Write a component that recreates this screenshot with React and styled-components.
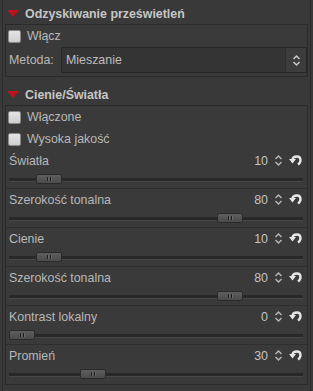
import React from 'react';
import styled, { createGlobalStyle } from 'styled-components';

const Global = createGlobalStyle`
  html, body { margin: 0; padding: 0; background: #393939; }
  body { width: 313px; height: 391px; overflow: hidden; font-family: "Liberation Sans", Arial, sans-serif; }
`;

const Panel = styled.div`
  width: 313px;
  height: 391px;
  box-sizing: border-box;
  padding: 0 2px;
  background: #393939;
`;

const Column = styled.div`
  height: 100%;
  box-sizing: border-box;
  border-left: 1px solid #2c2c2c;
  border-right: 1px solid #2c2c2c;
  padding: 3px 2px 0 2px;
  display: flex;
  flex-direction: column;
`;

const Header = styled.div`
  height: 21px;
  display: flex;
  align-items: center;
  gap: 6px;
  padding-left: 2px;
  margin-top: ${p => p.$gap || 0}px;
  color: #c6c6c6;
  font-weight: bold;
  font-size: 12.4px;
`;

const Triangle = styled.span`
  width: 0;
  height: 0;
  border-left: 6px solid transparent;
  border-right: 6px solid transparent;
  border-top: 7px solid #b8161c;
  margin-top: -1px;
`;

const Frame = styled.div`
  border: 1px solid #2a2a2a;
  background: #3a3a3a;
  display: flex;
  flex-direction: column;
  padding-bottom: ${p => p.$pb || 0}px;
`;

const CheckRow = styled.label`
  height: 22px;
  display: flex;
  align-items: center;
  gap: 6px;
  padding-left: 2px;
  color: #b8b8b8;
  font-size: 12.4px;
`;

const Box = styled.span`
  width: 13px;
  height: 13px;
  box-sizing: border-box;
  border: 1px solid #8a8a8a;
  border-radius: 2px;
  background: linear-gradient(#e4e4e4, #cfcfcf);
`;

const MethodRow = styled.div`
  height: 26px;
  display: flex;
  align-items: center;
  padding-left: 3px;
  color: #b8b8b8;
  font-size: 12.4px;
`;

const MethodLabel = styled.span`
  width: 52px;
`;

const Combo = styled.div`
  flex: 1;
  height: 26px;
  box-sizing: border-box;
  border: 1px solid #262626;
  background: #343434;
  display: flex;
  align-items: stretch;
`;

const ComboText = styled.span`
  flex: 1;
  display: flex;
  align-items: center;
  padding-left: 4px;
  color: #bdbdbd;
`;

const ComboButton = styled.span`
  width: 20px;
  display: flex;
  align-items: center;
  justify-content: center;
  background: #3c3c3c;
  border-left: 1px solid #2e2e2e;
`;

const Group = styled.div`
  height: 39px;
  box-sizing: border-box;
  display: flex;
  flex-direction: column;
  border-bottom: ${p => (p.$last ? 'none' : '1px solid #2e2e2e')};
`;

const LabelRow = styled.div`
  height: 21px;
  display: flex;
  align-items: center;
  padding-left: 3px;
  padding-right: 5px;
  color: #b8b8b8;
  font-size: 12.4px;
`;

const LabelText = styled.span`
  flex: 1;
`;

const Value = styled.span`
  color: #c4c4c4;
  margin-right: 6px;
`;

const IconSlot = styled.span`
  display: flex;
  align-items: center;
  margin-left: ${p => p.$ml || 0}px;
`;

const SliderRow = styled.div`
  height: 17px;
  display: flex;
  align-items: center;
  padding: 0 4px 0 3px;
`;

const Track = styled.div`
  position: relative;
  flex: 1;
  height: 3px;
  background: #282828;
  border-bottom: 1px solid #474747;
`;

const Thumb = styled.div`
  position: absolute;
  top: -4px;
  width: 26px;
  height: 10px;
  box-sizing: border-box;
  border: 1px solid #2a2a2a;
  border-radius: 2px;
  background: linear-gradient(#5e5e5e, #4b4b4b);
  display: flex;
  align-items: center;
  justify-content: center;
  gap: 2px;
`;

const Grip = styled.span`
  width: 1px;
  height: 4px;
  background: #1e1e1e;
  box-shadow: 1px 0 0 #6a6a6a;
`;

const Spin = ({ color = '#b5b5b5' }) => (
  <svg width="9" height="13" viewBox="0 0 9 13">
    <path d="M1.5 5 L4.5 2 L7.5 5 M1.5 8 L4.5 11 L7.5 8" stroke={color} strokeWidth="1.5" fill="none" />
  </svg>
);

const Reset = () => (
  <svg width="13" height="11" viewBox="0 0 13 11">
    <path d="M3.5 5 C3.5 2 6 1.5 8 1.5 C10.5 1.5 11.5 3 11.5 5 C11.5 7 10.5 8.5 9 9.5" stroke="#e6e6e6" strokeWidth="2.4" fill="none" />
    <path d="M0 4 L7 4 L3.5 8.5 Z" fill="#e6e6e6" />
  </svg>
);

const sliders = [
  { label: 'Światła', value: 10, min: 0, max: 100 },
  { label: 'Szerokość tonalna', value: 80, min: 10, max: 100 },
  { label: 'Cienie', value: 10, min: 0, max: 100 },
  { label: 'Szerokość tonalna', value: 80, min: 10, max: 100 },
  { label: 'Kontrast lokalny', value: 0, min: 0, max: 100 },
  { label: 'Promień', value: 30, min: 5, max: 100 },
];

const Slider = ({ label, value, min, max, last }) => {
  const pct = (value - min) / (max - min);
  return (
    <Group $last={last}>
      <LabelRow>
        <LabelText>{label}</LabelText>
        <Value>{value}</Value>
        <IconSlot><Spin /></IconSlot>
        <IconSlot $ml={6}><Reset /></IconSlot>
      </LabelRow>
      <SliderRow>
        <Track>
          <Thumb style={{ left: `calc(${pct} * (100% - 26px))` }}>
            <Grip />
            <Grip />
          </Thumb>
        </Track>
      </SliderRow>
    </Group>
  );
};

export default function App() {
  return (
    <>
      <Global />
      <Panel>
        <Column>
          <Header>
            <Triangle />
            <span>Odzyskiwanie prześwietleń</span>
          </Header>
          <Frame $pb={3}>
            <CheckRow><Box />Włącz</CheckRow>
            <MethodRow>
              <MethodLabel>Metoda:</MethodLabel>
              <Combo>
                <ComboText>Mieszanie</ComboText>
                <ComboButton><Spin color="#c8c8c8" /></ComboButton>
              </Combo>
            </MethodRow>
          </Frame>
          <Header $gap={7}>
            <Triangle />
            <span>Cienie/Światła</span>
          </Header>
          <Frame>
            <CheckRow><Box />Włączone</CheckRow>
            <CheckRow><Box />Wysoka jakość</CheckRow>
            {sliders.map((s, i) => (
              <Slider key={i} {...s} last={i === sliders.length - 1} />
            ))}
          </Frame>
        </Column>
      </Panel>
    </>
  );
}
